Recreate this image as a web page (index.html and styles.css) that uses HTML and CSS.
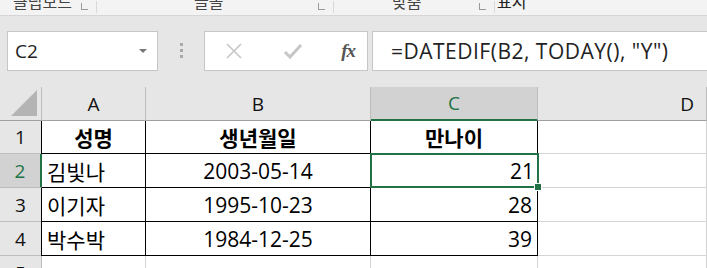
FILE: index.html
```html
<!DOCTYPE html>
<html lang="ko">
  <head>
    <meta charset="UTF-8" />
    <title>DATEDIF</title>
    <link rel="stylesheet" href="styles.css">
  </head>
  <body>
    <div class="ribbon">
      <div class="group g1"><span class="label">클립보드</span><span class="launch"></span></div>
      <div class="group g2"><span class="label">글꼴</span><span class="launch"></span></div>
      <div class="group g3"><span class="label">맞춤</span><span class="launch"></span></div>
      <div class="group g4"><span class="label">표시</span></div>
    </div>

    <div class="formula-bar">
      <div class="namebox">
        <span>C2</span>
        <span class="caret"></span>
      </div>
      <div class="grip"><i></i><i></i><i></i></div>
      <div class="buttons">
        <svg width="20" height="20" viewBox="0 0 20 20"><path d="M3 3 L17 17 M17 3 L3 17" stroke="#c6c6c6" stroke-width="1.6" fill="none"/></svg>
        <svg width="22" height="20" viewBox="0 0 22 20"><path d="M3 11 L8 16 L19 4" stroke="#c6c6c6" stroke-width="3" fill="none"/></svg>
        <span class="fx">fx</span>
      </div>
      <div class="formula">=DATEDIF(B2, TODAY(), "Y")</div>
    </div>

    <div class="sheet">
      <div class="corner"><span class="tri"></span></div>
      <div class="colhead">A</div>
      <div class="colhead">B</div>
      <div class="colhead sel">C</div>
      <div class="colhead">D</div>

      <div class="rowhead">1</div>
      <div class="cell t c bold top left">성명</div>
      <div class="cell t c bold top">생년월일</div>
      <div class="cell t c bold top">만나이</div>
      <div class="cell"></div>

      <div class="rowhead sel">2</div>
      <div class="cell t left">김빛나</div>
      <div class="cell t c">2003-05-14</div>
      <div class="cell t r active">21<span class="handle"></span></div>
      <div class="cell"></div>

      <div class="rowhead">3</div>
      <div class="cell t left">이기자</div>
      <div class="cell t c">1995-10-23</div>
      <div class="cell t r">28</div>
      <div class="cell"></div>

      <div class="rowhead">4</div>
      <div class="cell t left">박수박</div>
      <div class="cell t c">1984-12-25</div>
      <div class="cell t r">39</div>
      <div class="cell"></div>

      <div class="rowhead">5</div>
      <div class="cell"></div>
      <div class="cell"></div>
      <div class="cell"></div>
      <div class="cell"></div>
    </div>
  </body>
</html>
```

FILE: styles.css
```css
* {
  margin: 0;
  padding: 0;
  box-sizing: border-box;
}

body {
  width: 707px;
  height: 268px;
  overflow: hidden;
  background: #e6e6e6;
  font-family: "Open Sans", "Noto Sans CJK KR", sans-serif;
  color: #000;
}

.ribbon {
  display: flex;
  height: 16px;
  background: #f3f3f3;
  border-bottom: 1px solid #d6d6d6;
  overflow: hidden;
}

.group {
  position: relative;
  border-right: 1px solid #d9d9d9;
  height: 12px;
  margin-top: 1px;
}

.group .label {
  position: absolute;
  top: -10px;
  font-family: "Noto Sans CJK KR", sans-serif;
  font-size: 16px;
  line-height: 20px;
  color: #444;
  white-space: nowrap;
}

.launch {
  position: absolute;
  right: 8px;
  top: 2px;
  width: 7px;
  height: 7px;
  border-left: 1px solid #999;
  border-bottom: 1px solid #999;
}

.g1 { width: 97px; }
.g1 .label { left: 13px; }
.g2 { width: 237px; }
.g2 .label { left: 97px; }
.g3 { width: 161px; }
.g3 .label { left: 58px; }
.g4 { flex: 1; border-right: none; }
.g4 .label { left: 2px; color: #222; }

.formula-bar {
  display: flex;
  align-items: center;
  height: 70px;
  padding: 14px 0 15px 7px;
}

.namebox {
  display: flex;
  align-items: center;
  justify-content: space-between;
  width: 151px;
  height: 40px;
  background: #fff;
  border: 1px solid #c6c6c6;
  padding: 0 10px 0 7px;
  font-size: 19px;
  color: #222;
}

.caret {
  width: 0;
  height: 0;
  border-left: 4px solid transparent;
  border-right: 4px solid transparent;
  border-top: 4px solid #777;
}

.grip {
  display: flex;
  flex-direction: column;
  gap: 3px;
  width: 46px;
  align-items: center;
}

.grip i {
  display: block;
  width: 3px;
  height: 3px;
  background: #a8a8a8;
}

.buttons {
  display: flex;
  align-items: center;
  justify-content: space-between;
  width: 164px;
  height: 40px;
  background: #fff;
  border: 1px solid #c6c6c6;
  padding: 0 12px 0 19px;
}

.fx {
  font-family: "Liberation Serif", serif;
  font-style: italic;
  font-weight: bold;
  font-size: 19px;
  color: #555;
  letter-spacing: -1px;
}

.formula {
  flex: 1;
  height: 40px;
  margin-left: 4px;
  background: #fff;
  border: 1px solid #c6c6c6;
  border-right: none;
  padding-left: 18px;
  line-height: 38px;
  font-size: 21px;
  letter-spacing: 0.5px;
  color: #222;
}

.sheet {
  display: grid;
  grid-template-columns: 42px 104px 225px 167px 169px;
  grid-template-rows: 34px 33px 34px 34px 34px 34px;
  margin-top: 1px;
}

.corner {
  position: relative;
  background: #e6e6e6;
  border-right: 1px solid #bdbdbd;
  border-bottom: 1px solid #a0a0a0;
}

.tri {
  position: absolute;
  right: 4px;
  bottom: 4px;
  width: 0;
  height: 0;
  border-left: 26px solid transparent;
  border-bottom: 26px solid #b4b4b4;
}

.colhead {
  display: flex;
  align-items: center;
  justify-content: center;
  background: #e6e6e6;
  border-right: 1px solid #bdbdbd;
  border-bottom: 1px solid #a0a0a0;
  font-size: 19px;
  color: #111;
}

.colhead:nth-child(5) {
  justify-content: flex-end;
  padding-right: 12px;
}

.colhead.sel {
  background: #d2d2d2;
  color: #217346;
  border-bottom: 2px solid #217346;
}

.rowhead {
  display: flex;
  align-items: center;
  justify-content: center;
  background: #e6e6e6;
  border-right: 1px solid #bdbdbd;
  border-bottom: 1px solid #bdbdbd;
  font-size: 19px;
  color: #111;
}

.rowhead.sel {
  background: #d2d2d2;
  color: #217346;
  border-right: 2px solid #217346;
}

.cell {
  position: relative;
  display: flex;
  align-items: center;
  background: #fff;
  border-right: 1px solid #d4d4d4;
  border-bottom: 1px solid #d4d4d4;
  font-size: 21px;
  padding: 0 5px;
}

.cell.t {
  border-right: 1px solid #000;
  border-bottom: 1px solid #000;
}

.cell.left {
  border-left: 1px solid #000;
  margin-left: -1px;
}

.rowhead.sel + .cell.left {
  border-left: none;
  margin-left: 0;
}

.cell.c { justify-content: center; }
.cell.r { justify-content: flex-end; }
.cell.bold { font-weight: bold; }

.cell.active {
  z-index: 2;
  border: 2px solid #217346;
  margin: -1px -1px 0 -1px;
  padding-right: 3px;
}

.handle {
  position: absolute;
  right: -5px;
  bottom: -5px;
  width: 6px;
  height: 6px;
  background: #217346;
  border: 1px solid #fff;
  box-sizing: content-box;
}
```
